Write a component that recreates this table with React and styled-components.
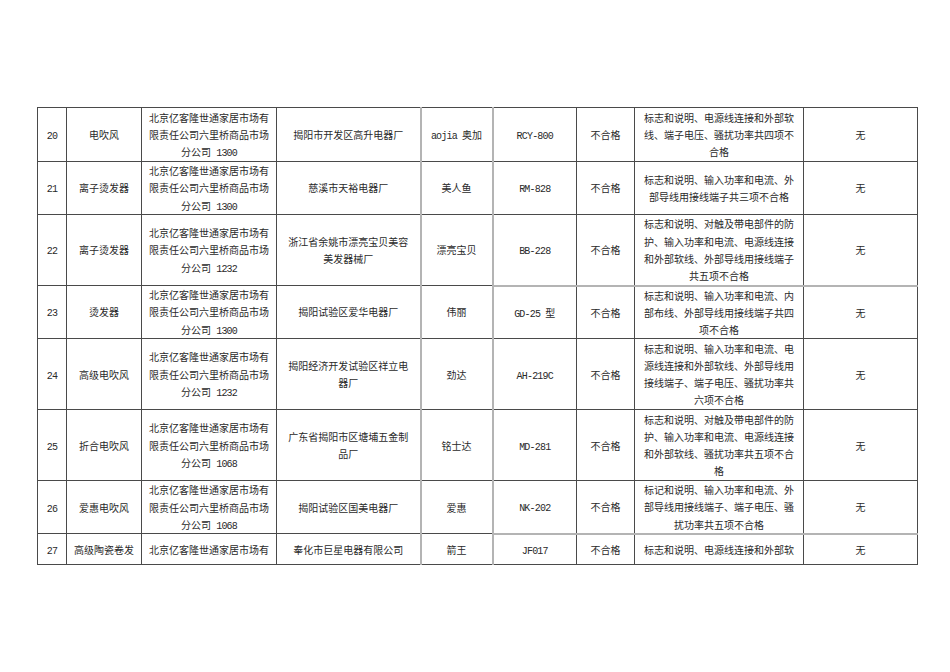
import React from "react";
import styled, { createGlobalStyle } from "styled-components";

const Global = createGlobalStyle`
  html, body { margin: 0; padding: 0; background: #fff; }
  body { font-family: "Liberation Serif", "Noto Sans CJK SC", serif; }
`;

const Page = styled.div`
  width: 950px;
  height: 672px;
  box-sizing: border-box;
  padding: 107px 0 0 37px;
  background: #fff;
`;

const Table = styled.table`
  border-collapse: collapse;
  table-layout: fixed;
  width: 881px;
  color: #2a2a2a;
  font-family: "Noto Sans CJK SC", sans-serif;
  font-size: 10px;
  line-height: 17.2px;
`;

const Row = styled.tr`
  height: ${(p) => p.$h}px;
`;

const Cell = styled.td`
  border: 1px solid #4a4a4a;
  border-left: ${(p) => (p.$soft ? "2px solid #b4b4b4" : "1px solid #4a4a4a")};
  border-top: ${(p) => (p.$softTop ? "2px solid #b4b4b4" : "1px solid #4a4a4a")};
  padding: 0;
  text-align: center;
  vertical-align: middle;
  white-space: pre;
  overflow: hidden;
`;

const Lat = styled.span`
  font-family: "Liberation Mono", monospace;
  letter-spacing: -0.8px;
  line-height: 10px;
`;

const widths = [29, 75, 135, 144, 72, 84, 58, 169, 114];

const LAT = /( ?[A-Za-z0-9\-]+ ?)/;

function Txt({ s }) {
  const parts = s.split(LAT);
  return parts.map((p, i) =>
    p && /[A-Za-z0-9]/.test(p) && LAT.test(p) ? <Lat key={i}>{p}</Lat> : <React.Fragment key={i}>{p}</React.Fragment>
  );
}

function Lines({ v }) {
  const arr = Array.isArray(v) ? v : [v];
  return arr.map((l, i) => (
    <React.Fragment key={i}>
      {i > 0 && <br />}
      <Txt s={l} />
    </React.Fragment>
  ));
}

const seller = (n) => ["北京亿客隆世通家居市场有", "限责任公司六里桥商品市场", `分公司 ${n}`];

const rows = [
  {
    h: 54,
    c: ["20", "电吹风", seller("1300"), "揭阳市开发区高升电器厂", "aojia 奥加", "RCY-800", "不合格",
      ["标志和说明、电源线连接和外部软", "线、端子电压、骚扰功率共四项不", "合格"], "无"],
  },
  {
    h: 53,
    c: ["21", "离子烫发器", seller("1300"), "慈溪市天裕电器厂", "美人鱼", "RM-828", "不合格",
      ["标志和说明、输入功率和电流、外", "部导线用接线端子共三项不合格"], "无"],
  },
  {
    h: 71,
    c: ["22", "离子烫发器", seller("1232"), ["浙江省余姚市漂亮宝贝美容", "美发器械厂"], "漂亮宝贝", "BB-228", "不合格",
      ["标志和说明、对触及带电部件的防", "护、输入功率和电流、电源线连接", "和外部软线、外部导线用接线端子", "共五项不合格"], "无"],
  },
  {
    h: 53,
    soft: true,
    c: ["23", "烫发器", seller("1300"), "揭阳试验区爱华电器厂", "伟丽", "GD-25 型", "不合格",
      ["标志和说明、输入功率和电流、内", "部布线、外部导线用接线端子共四", "项不合格"], "无"],
  },
  {
    h: 71,
    c: ["24", "高级电吹风", seller("1232"), ["揭阳经济开发试验区祥立电", "器厂"], "劲达", "AH-219C", "不合格",
      ["标志和说明、输入功率和电流、电", "源线连接和外部软线、外部导线用", "接线端子、端子电压、骚扰功率共", "六项不合格"], "无"],
  },
  {
    h: 71,
    c: ["25", "折合电吹风", seller("1068"), ["广东省揭阳市区塘埔五金制", "品厂"], "铭士达", "MD-281", "不合格",
      ["标志和说明、对触及带电部件的防", "护、输入功率和电流、电源线连接", "和外部软线、骚扰功率共五项不合", "格"], "无"],
  },
  {
    h: 53,
    c: ["26", "爱惠电吹风", seller("1068"), "揭阳试验区国美电器厂", "爱惠", "NK-202", "不合格",
      ["标记和说明、输入功率和电流、外", "部导线用接线端子、端子电压、骚", "扰功率共五项不合格"], "无"],
  },
  {
    h: 31,
    soft: true,
    c: ["27", "高级陶瓷卷发", "北京亿客隆世通家居市场有", "奉化市巨星电器有限公司", "箭王", "JF017", "不合格",
      "标志和说明、电源线连接和外部软", "无"],
  },
];

export default function App() {
  return (
    <Page>
      <Global />
      <Table>
        <colgroup>
          {widths.map((w, i) => (
            <col key={i} style={{ width: w }} />
          ))}
        </colgroup>
        <tbody>
          {rows.map((r, ri) => (
            <Row key={ri} $h={r.h}>
              {r.c.map((v, ci) => (
                <Cell key={ci} $soft={ci === 4 || ci === 5} $softTop={r.soft && ci >= 5}>
                  <Lines v={v} />
                </Cell>
              ))}
            </Row>
          ))}
        </tbody>
      </Table>
    </Page>
  );
}
